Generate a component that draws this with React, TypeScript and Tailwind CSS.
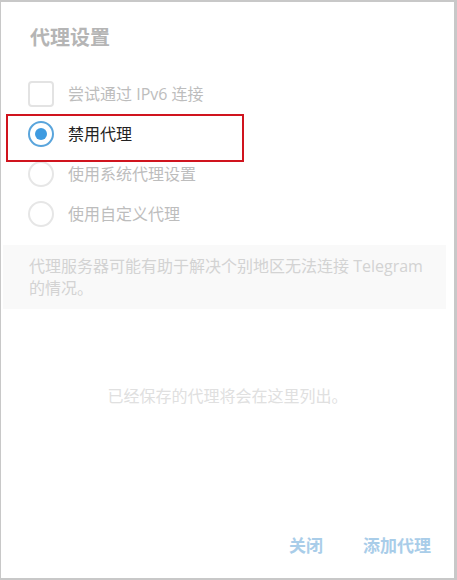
import React from "react";

const font = { fontFamily: '"Open Sans", "Noto Sans CJK SC", sans-serif' };

function Radio({ checked }: { checked?: boolean }) {
  return (
    <span
      className={`w-[26px] h-[26px] rounded-full border-2 flex items-center justify-center shrink-0 ${
        checked ? "border-[#5aa5dc]" : "border-[#e6e6e6]"
      }`}
    >
      {checked && <span className="w-[12px] h-[12px] rounded-full bg-[#3f9be0]" />}
    </span>
  );
}

export default function App() {
  return (
    <div
      className="w-[457px] h-[580px] bg-[#c8c8c8] pt-[2px] pl-[1px] pr-[3px] pb-[2px]"
      style={font}
    >
      <div className="relative h-full bg-white flex flex-col">
        <div className="pl-[29px] pt-[22px] text-[20px] leading-[28px] font-semibold text-[#b5b5b5]">
          代理设置
        </div>

        <div className="mt-[22px] flex flex-col">
          <div className="h-[40px] pl-[27px] flex items-center gap-[14px]">
            <span className="w-[26px] h-[26px] rounded-[4px] border-2 border-[#e3e3e3] shrink-0" />
            <span className="text-[16px] text-[#bdbdbd]">尝试通过 IPv6 连接</span>
          </div>
          <div className="h-[40px] pl-[27px] flex items-center gap-[14px]">
            <Radio checked />
            <span className="text-[16px] text-[#222222]">禁用代理</span>
          </div>
          <div className="h-[40px] pl-[27px] flex items-center gap-[14px]">
            <Radio />
            <span className="text-[16px] text-[#bdbdbd]">使用系统代理设置</span>
          </div>
          <div className="h-[40px] pl-[27px] flex items-center gap-[14px]">
            <Radio />
            <span className="text-[16px] text-[#bdbdbd]">使用自定义代理</span>
          </div>
        </div>

        <div className="mt-[11px] ml-[2px] mr-[8px] bg-[#f9f9f9] pl-[26px] pr-[16px] py-[10px] text-[16px] leading-[22px] text-[#d3d3d3]">
          代理服务器可能有助于解决个别地区无法连接 Telegram 的情况。
        </div>

        <div className="h-[174px] flex items-center justify-center text-[16px] text-[#e0e0e0]">
          已经保存的代理将会在这里列出。
        </div>

        <div className="flex-1 flex items-end justify-end gap-[40px] pr-[23px] pb-[20px]">
          <button className="text-[17px] leading-[24px] font-semibold text-[#a9cde9]">关闭</button>
          <button className="text-[17px] leading-[24px] font-semibold text-[#a9cde9]">添加代理</button>
        </div>

        <div className="absolute left-[5px] top-[112px] w-[238px] h-[48px] border-2 border-[#d0141e]" />
      </div>
    </div>
  );
}
